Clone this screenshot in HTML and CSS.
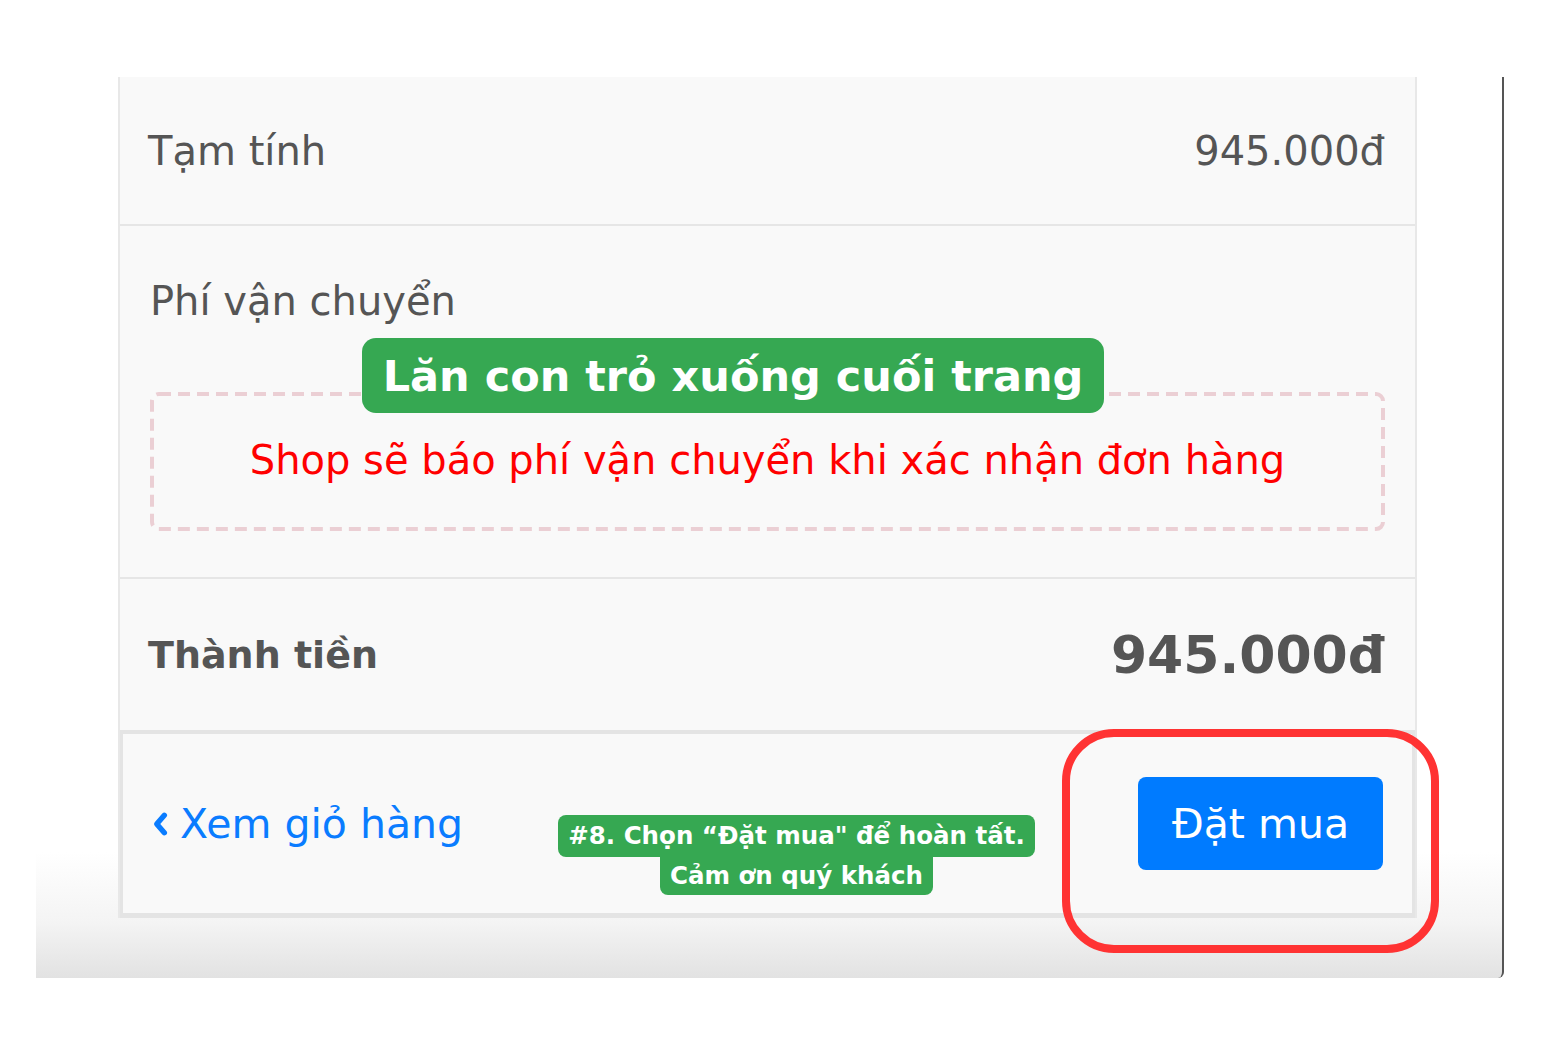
FILE: index.html
```html
<!DOCTYPE html>
<html lang="vi">
<head>
<meta charset="utf-8">
<title>Thanh toán</title>
<link rel="stylesheet" href="styles.css">
</head>
<body>
<div class="stage">
  <div class="panel">
    <div class="card">
      <div class="row row-sub">
        <span class="label">Tạm tính</span>
        <span class="value">945.000đ</span>
      </div>
      <div class="row row-ship">
        <span class="label">Phí vận chuyển</span>
        <div class="notice">
          <svg class="dash" width="100%" height="100%" preserveAspectRatio="none"><rect x="2" y="2" width="calc(100% - 4px)" height="calc(100% - 4px)" rx="7" ry="7" fill="none" stroke="#ebcfd4" stroke-width="4" stroke-dasharray="12 7"/></svg>
          <span class="notice-text">Shop sẽ báo phí vận chuyển khi xác nhận đơn hàng</span>
        </div>
      </div>
      <div class="row row-total">
        <span class="label total-label">Thành tiền</span>
        <span class="value total-value">945.000đ</span>
      </div>
      <div class="footer">
        <a class="back" href="#"><svg class="chev" viewBox="0 0 16 24" width="18" height="26"><path d="M12 4 L5 12 L12 20" fill="none" stroke="#0a7cff" stroke-width="5" stroke-linecap="round" stroke-linejoin="round"/></svg>Xem giỏ hàng</a>
        <button class="order">Đặt mua</button>
      </div>
    </div>
  </div>
  <div class="tip-scroll">Lăn con trỏ xuống cuối trang</div>
  <div class="tip-step">
    <span class="tip-line">#8. Chọn “Đặt mua" để hoàn tất.</span>
    <span class="tip-line tip-line2">Cảm ơn quý khách</span>
  </div>
  <div class="highlight"></div>
</div>
</body>
</html>
```

FILE: styles.css
```css
html, body {
  margin: 0;
  padding: 0;
  background: #ffffff;
}
body {
  font-family: "DejaVu Sans", "Noto Sans", sans-serif;
  color: #555555;
}
.stage {
  position: relative;
  width: 1546px;
  height: 1060px;
  padding-top: 77px;
  box-sizing: border-box;
}
.panel {
  margin-left: 36px;
  width: 1466px;
  height: 901px;
  border-right: 2px solid #555555;
  border-bottom-right-radius: 6px;
  background: linear-gradient(to bottom, #ffffff 0px, #ffffff 775px, #f4f4f4 845px, #e2e2e2 901px);
}
.card {
  margin-left: 82px;
  width: 1295px;
  background: #f9f9f9;
  border-left: 2px solid #e8e8e8;
  border-right: 2px solid #e8e8e8;
}
.row {
  display: flex;
  align-items: center;
  justify-content: space-between;
  padding: 0 30px 0 28px;
  border-bottom: 2px solid #e6e6e6;
  box-sizing: border-box;
}
.label {
  font-size: 40px;
  color: #555555;
}
.value {
  font-size: 40px;
  color: #555555;
}
.row-sub {
  height: 149px;
}
.row-ship {
  flex-direction: column;
  align-items: stretch;
  padding: 52px 30px 46px 30px;
  height: 353px;
}
.row-ship .label {
  line-height: 46px;
}
.notice {
  position: relative;
  height: 139px;
  display: flex;
  align-items: center;
  justify-content: center;
}
.dash {
  position: absolute;
  left: 0;
  top: 0;
}
.notice-text {
  position: relative;
  color: #ff0000;
  font-size: 40px;
  margin-top: -3px;
}
.row-total {
  height: 155px;
  border-bottom: 4px solid #e4e4e4;
}
.total-label {
  font-size: 38px;
  font-weight: bold;
}
.total-value {
  font-weight: bold;
  font-size: 52px;
}
.footer {
  height: 184px;
  box-sizing: border-box;
  border: 3px solid #e4e4e4;
  border-top: none;
  border-bottom-width: 5px;
  display: flex;
  align-items: center;
  justify-content: space-between;
  padding: 0 29px 0 28px;
}
.back {
  display: flex;
  align-items: center;
  gap: 11px;
  color: #0a7cff;
  text-decoration: none;
  font-size: 41px;
}
.chev {
  display: block;
}
.order {
  width: 245px;
  height: 93px;
  background: #007bff;
  color: #ffffff;
  border: none;
  border-radius: 8px;
  font-family: inherit;
  font-size: 41px;
}
.tip-scroll {
  position: absolute;
  left: 362px;
  top: 338px;
  width: 742px;
  height: 75px;
  border-radius: 14px;
  background: #36a852;
  color: #ffffff;
  font-weight: bold;
  font-size: 43px;
  display: flex;
  align-items: center;
  justify-content: center;
}
.tip-step {
  position: absolute;
  left: 559px;
  top: 815px;
  width: 475px;
  display: flex;
  flex-direction: column;
  align-items: center;
}
.tip-line {
  background: #36a852;
  color: #ffffff;
  font-weight: bold;
  font-size: 24.5px;
  line-height: 42px;
  padding: 0 10px;
  border-radius: 8px;
  white-space: nowrap;
}
.tip-line2 {
  line-height: 38px;
  border-radius: 0 0 8px 8px;
}
.highlight {
  position: absolute;
  left: 1062px;
  top: 729px;
  width: 377px;
  height: 224px;
  box-sizing: border-box;
  border: 8px solid #ff3333;
  border-radius: 52px;
}
```
